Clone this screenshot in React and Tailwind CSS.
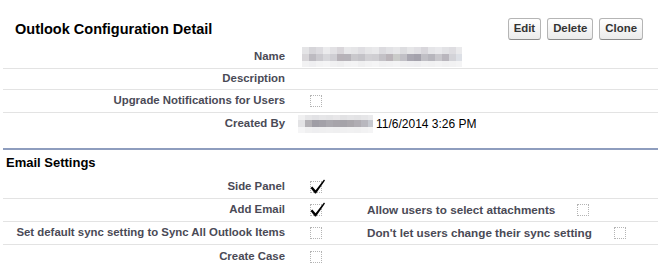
import React from "react";

const nameBlur = {
  top: ["#e4e4e6", "#d6d5d9", "#dddce0", "#ebebed", "#e2e1e4", "#d9d6da", "#e8e8ea", "#e5e5e7", "#dfdee2", "#e6e6e8", "#e9e9eb", "#dcdbdf", "#e2e2e5", "#e7e7e9", "#dddde0", "#e6e6e8", "#e1e0e4", "#d8d6db", "#e5e5e8", "#e9e9ec", "#e2e2e5", "#dedde1", "#eaeaec"],
  mid: ["#d8d6d9", "#bdbbc1", "#cbcacf", "#d7d7db", "#cfced3", "#b7b2b8", "#b6b3b9", "#c9c8cc", "#c4c3c8", "#d1d0d4", "#cfced2", "#c3c1c6", "#bab4b9", "#cacbc9", "#c1c0c6", "#a9a7b1", "#a4a2ac", "#c0bfc5", "#b7b6bd", "#c8c7cc", "#b9b6bd", "#d3d3d8", "#dde0e6"],
  bot: ["#f2f2f3", "#efeff1", "#f3f3f4", "#f5f5f6", "#f1f1f2", "#efeff0", "#f3f3f4", "#f4f4f5", "#f0f0f1", "#f3f3f4", "#f5f5f6", "#f1f1f2", "#f2f2f3", "#f4f4f5", "#f1f1f2", "#f0f0f2", "#efeff1", "#f2f2f3", "#f1f1f2", "#f3f3f4", "#f1f1f2", "#f2f2f3", "#f4f4f5"],
};

const createdBlur = {
  top: ["#f0f0f1", "#e6e6e8", "#e2e2e5", "#e6e6e8", "#e4e4e6", "#e8e7e9", "#e2e2e4", "#e5e5e7", "#e3e3e5", "#e6e6e8", "#eaeaec"],
  mid: ["#e3e3e5", "#b3b1b5", "#9f9da5", "#a3a1a8", "#aaa8ae", "#a7a4aa", "#a5a3a9", "#aaa7ac", "#b0adb3", "#b8b7be", "#c6c9d0"],
  bot: ["#f5f5f6", "#f0f0f1", "#eeeef0", "#efeff0", "#f0f0f1", "#efeff0", "#f0f0f1", "#f1f1f2", "#f0f0f1", "#f2f2f3", "#f4f4f5"],
};

function Blur({ data, w, h, cell, rows }) {
  return (
    <svg width={w} height={h} className="block">
      {["top", "mid", "bot"].map((r, ri) =>
        data[r].map((c, i) => (
          <rect key={r + i} x={i * cell} y={rows[ri][0]} width={cell} height={rows[ri][1]} fill={c} />
        ))
      )}
    </svg>
  );
}

function Box({ checked }) {
  return (
    <div className="relative w-[12px] h-[12px] border border-dotted border-[#b4b4b4] shrink-0">
      {checked && (
        <svg className="absolute left-[-2px] top-[-3px]" width="17" height="16" viewBox="0 0 17 16">
          <path d="M1.5 9 L3.3 7.6 L6.6 11.2 L15 0.6 L16 1.4 L7 14.6 L6 14.6 Z" fill="#000" />
        </svg>
      )}
    </div>
  );
}

const labelCls = "w-[282px] shrink-0 text-right font-bold text-[11.4px] text-[#4a4a56] whitespace-nowrap";
const rightLabelCls = "font-bold text-[11.7px] text-[#4a4a56] whitespace-nowrap";
const rowCls = "flex items-center ml-[3px] border-b border-[#e3e3e3]";

function Btn({ children }) {
  return (
    <button className="h-[22px] px-[5px] rounded-[3px] border border-[#b5b5b5] border-b-[#8a8a8a] bg-linear-to-b from-white to-[#ebebeb] text-[11.4px] font-bold text-[#333]">
      {children}
    </button>
  );
}

export default function App() {
  return (
    <div className="w-[658px] h-[272px] bg-white font-['Liberation_Sans',Arial,sans-serif] overflow-hidden">
      {/* header */}
      <div className="flex items-center justify-between h-[22px] mt-[18px] mb-[6px] pl-[15px] pr-[15px]">
        <div className="text-[14.5px] font-bold text-black leading-none">Outlook Configuration Detail</div>
        <div className="flex gap-[6px]">
          <Btn>Edit</Btn>
          <Btn>Delete</Btn>
          <Btn>Clone</Btn>
        </div>
      </div>

      {/* detail rows */}
      <div className={rowCls + " h-[23px]"}>
        <div className={labelCls}>Name</div>
        <div className="pl-[17px]">
          <Blur data={nameBlur} w={160} h={20} cell={7} rows={[[0, 7], [7, 7], [14, 6]]} />
        </div>
      </div>
      <div className={rowCls + " h-[21px]"}>
        <div className={labelCls}>Description</div>
      </div>
      <div className={rowCls + " h-[23px]"}>
        <div className={labelCls}>Upgrade Notifications for Users</div>
        <div className="pl-[25px]">
          <Box />
        </div>
      </div>
      <div className="flex items-center ml-[3px] h-[22px]">
        <div className={labelCls}>Created By</div>
        <div className="pl-[13px] flex items-center">
          <Blur data={createdBlur} w={75} h={18} cell={7} rows={[[0, 5], [5, 7], [12, 6]]} />
          <span className="ml-[3px] text-[12px] text-black">11/6/2014 3:26 PM</span>
        </div>
      </div>

      {/* Email settings */}
      <div className="mt-[13px] ml-[3px] border-t-2 border-[#8e9dbe]">
        <div className="h-[25px] flex items-center pl-[3px] text-[13px] font-bold text-black">Email Settings</div>
      </div>
      <div className={rowCls + " h-[24px]"}>
        <div className={labelCls}>Side Panel</div>
        <div className="pl-[25px]">
          <Box checked />
        </div>
      </div>
      <div className={rowCls + " h-[23px]"}>
        <div className={labelCls}>Add Email</div>
        <div className="w-[82px] shrink-0 pl-[25px]">
          <Box checked />
        </div>
        <div className={rightLabelCls}>Allow users to select attachments</div>
        <div className="ml-[22px]">
          <Box />
        </div>
      </div>
      <div className={rowCls + " h-[23px]"}>
        <div className={labelCls}>Set default sync setting to Sync All Outlook Items</div>
        <div className="w-[82px] shrink-0 pl-[25px]">
          <Box />
        </div>
        <div className={rightLabelCls}>Don't let users change their sync setting</div>
        <div className="ml-[22px]">
          <Box />
        </div>
      </div>
      <div className="flex items-center ml-[3px] h-[23px]">
        <div className={labelCls}>Create Case</div>
        <div className="pl-[25px]">
          <Box />
        </div>
      </div>
    </div>
  );
}
